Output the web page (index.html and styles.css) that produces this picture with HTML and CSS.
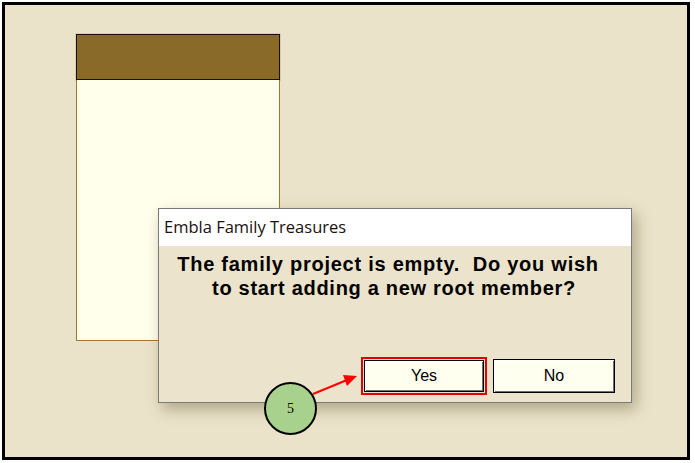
FILE: index.html
```html
<!DOCTYPE html>
<html>
<head>
<meta charset="utf-8">
<link rel="stylesheet" href="styles.css">
</head>
<body>
<div class="frame">
  <div class="card">
    <div class="card-head"></div>
    <div class="card-body"></div>
  </div>
  <div class="dialog">
    <div class="dlg-title">Embla Family Treasures</div>
    <div class="dlg-body">
      <div class="msg">
        <span class="line">The family project is empty.&nbsp; Do you wish</span>
        <span class="line line2">to start adding a new root member?</span>
      </div>
      <div class="buttons">
        <div class="hl"><button class="btn">Yes</button></div>
        <button class="btn">No</button>
      </div>
    </div>
  </div>
  <svg class="arrow" width="60" height="30" viewBox="0 0 60 30">
    <line x1="2" y1="27" x2="36" y2="13" stroke="#ff0000" stroke-width="2"/>
    <polygon points="46,9 32,8 36,19" fill="#ff0000"/>
  </svg>
  <div class="step">5</div>
</div>
</body>
</html>
```
FILE: styles.css
```css
html, body { margin: 0; padding: 0; background: #ffffff; }
body { width: 695px; height: 463px; }
.frame {
  position: relative;
  margin: 2px 0 0 2px;
  width: 682px;
  height: 452px;
  border: 3px solid #000;
  background: #ebe3c9;
  overflow: hidden;
}
.card {
  position: absolute;
  left: 71px;
  top: 29px;
  width: 204px;
  height: 307px;
  display: flex;
  flex-direction: column;
}
.card-head {
  height: 44px;
  background: #8a6a29;
  border: 1px solid #1a1208;
  box-shadow: 0 0 0 1px #d8cfa8;
}
.card-body {
  flex: 1;
  background: #ffffec;
  border: 1px solid #a4772f;
  border-top: none;
}
.dialog {
  position: absolute;
  left: 153px;
  top: 203px;
  width: 472px;
  height: 193px;
  border: 1px solid #7a7a78;
  background: #ebe3cb;
  box-shadow: 4px 6px 14px rgba(60, 50, 20, 0.35);
  display: flex;
  flex-direction: column;
}
.dlg-title {
  height: 37px;
  background: #ffffff;
  font-family: "Open Sans", "Noto Sans", sans-serif;
  font-size: 16.5px;
  color: #1c1010;
  padding-left: 5px;
  line-height: 35px;
}
.dlg-body { flex: 1; display: flex; flex-direction: column; }
.msg {
  margin: 6px 0 0 0;
  display: flex;
  flex-direction: column;
  align-items: center;
  font-family: "Liberation Sans", Arial, sans-serif;
  font-weight: bold;
  font-size: 20px;
  letter-spacing: 0.75px;
  line-height: 24px;
  color: #000;
  padding-right: 14px;
}
.line { white-space: nowrap; }
.line2 { margin-left: 12px; letter-spacing: 0.7px; }
.buttons {
  display: flex;
  justify-content: flex-end;
  align-items: center;
  gap: 6px;
  margin-top: 57px;
  padding-right: 16px;
}
.hl {
  border: 2px solid #e00000;
  padding: 1px;
  display: flex;
}
.btn {
  width: 122px;
  height: 34px;
  background: #fffff0;
  border: 1px solid #000;
  box-shadow: inset 1px 1px 0 #fff, inset -1px -1px 0 #6e6e6e;
  font-family: "Liberation Sans", Arial, sans-serif;
  font-size: 16px;
  color: #000;
  padding: 0;
}
.hl .btn { width: 120px; height: 32px; }
.arrow {
  position: absolute;
  left: 306px;
  top: 362px;
}
.step {
  position: absolute;
  left: 259px;
  top: 377px;
  width: 49px;
  height: 49px;
  border: 2px solid #000;
  border-radius: 50%;
  background: #a9d18e;
  display: flex;
  align-items: center;
  justify-content: center;
  font-family: "Liberation Serif", "Times New Roman", serif;
  font-size: 14px;
  color: #000;
}
```
